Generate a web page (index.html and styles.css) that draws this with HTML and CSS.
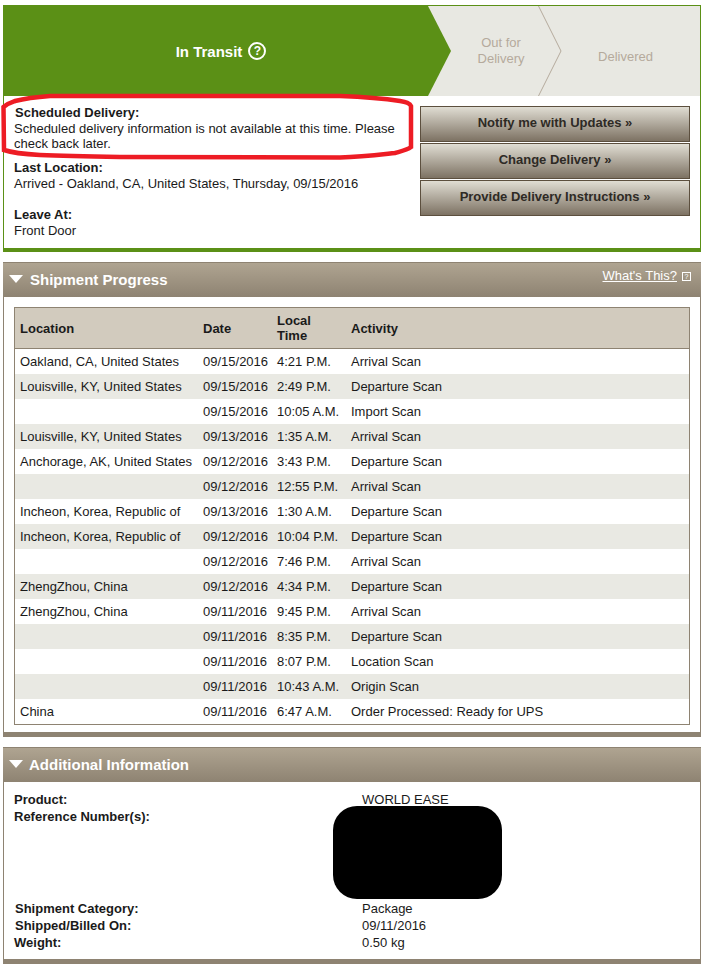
FILE: index.html
```html
<!DOCTYPE html>
<html lang="en">
<head>
    <meta charset="UTF-8">
    <title>Shipment Tracking</title>
    <link rel="stylesheet" href="styles.css">
</head>
<body>
    <section class="status-panel">
        <div class="progress">
            <div class="step-current">
                <span>In Transit</span>
                <span class="help-circle">?</span>
            </div>
            <div class="step step-out">Out for<br>Delivery</div>
            <div class="step step-delivered">Delivered</div>
            <svg class="chevron" width="24" height="90" viewBox="0 0 24 90">
                <path d="M0.5 0 L23 45 L0.5 90" fill="none" stroke="#b5aa9c" stroke-width="1"/>
            </svg>
        </div>
        <div class="status-body">
            <div class="status-info">
                <div class="info-block sched">
                    <strong>Scheduled Delivery:</strong>
                    <p>Scheduled delivery information is not available at this time. Please check back later.</p>
                </div>
                <div class="info-block last">
                    <strong>Last Location:</strong>
                    <p>Arrived - Oakland, CA, United States, Thursday, 09/15/2016</p>
                </div>
                <div class="info-block leave">
                    <strong>Leave At:</strong>
                    <p>Front Door</p>
                </div>
            </div>
            <div class="actions">
                <a class="btn">Notify me with Updates »</a>
                <a class="btn">Change Delivery »</a>
                <a class="btn">Provide Delivery Instructions »</a>
            </div>
        </div>
        <svg class="red-mark" width="416" height="70" viewBox="0 0 416 70">
            <path d="M49 3 L339 3 C366 4 386 6 399 8 C405 9 409 10 410 13 L410 54 C406 57 401 58 394 60 C376 62 361 64 339 64.5 L119 64 C86 63.5 61 63 39 62 C21 61 9 59 3 57 L2.5 14 C7 10 11 9 14 8 C26 5 36 4 49 3 Z" fill="none" stroke="#ed1c24" stroke-width="4.5"/>
        </svg>
    </section>

    <section class="panel progress-panel">
        <header class="panel-head">
            <span class="arrow-down"></span>
            <h2>Shipment Progress</h2>
            <a class="whats-this">What's This?</a>
            <span class="help-box">?</span>
        </header>
        <div class="table-wrap">
            <table>
                <thead>
                    <tr><th class="col-loc">Location</th><th class="col-date">Date</th><th class="col-time">Local<br>Time</th><th>Activity</th></tr>
                </thead>
                <tbody>
                    <tr><td>Oakland, CA, United States</td><td>09/15/2016</td><td>4:21 P.M.</td><td>Arrival Scan</td></tr>
                    <tr><td>Louisville, KY, United States</td><td>09/15/2016</td><td>2:49 P.M.</td><td>Departure Scan</td></tr>
                    <tr><td></td><td>09/15/2016</td><td>10:05 A.M.</td><td>Import Scan</td></tr>
                    <tr><td>Louisville, KY, United States</td><td>09/13/2016</td><td>1:35 A.M.</td><td>Arrival Scan</td></tr>
                    <tr><td>Anchorage, AK, United States</td><td>09/12/2016</td><td>3:43 P.M.</td><td>Departure Scan</td></tr>
                    <tr><td></td><td>09/12/2016</td><td>12:55 P.M.</td><td>Arrival Scan</td></tr>
                    <tr><td>Incheon, Korea, Republic of</td><td>09/13/2016</td><td>1:30 A.M.</td><td>Departure Scan</td></tr>
                    <tr><td>Incheon, Korea, Republic of</td><td>09/12/2016</td><td>10:04 P.M.</td><td>Departure Scan</td></tr>
                    <tr><td></td><td>09/12/2016</td><td>7:46 P.M.</td><td>Arrival Scan</td></tr>
                    <tr><td>ZhengZhou, China</td><td>09/12/2016</td><td>4:34 P.M.</td><td>Departure Scan</td></tr>
                    <tr><td>ZhengZhou, China</td><td>09/11/2016</td><td>9:45 P.M.</td><td>Arrival Scan</td></tr>
                    <tr><td></td><td>09/11/2016</td><td>8:35 P.M.</td><td>Departure Scan</td></tr>
                    <tr><td></td><td>09/11/2016</td><td>8:07 P.M.</td><td>Location Scan</td></tr>
                    <tr><td></td><td>09/11/2016</td><td>10:43 A.M.</td><td>Origin Scan</td></tr>
                    <tr><td>China</td><td>09/11/2016</td><td>6:47 A.M.</td><td>Order Processed: Ready for UPS</td></tr>
                </tbody>
            </table>
        </div>
    </section>

    <section class="panel extra-panel">
        <header class="panel-head">
            <span class="arrow-down"></span>
            <h2>Additional Information</h2>
        </header>
        <dl class="details">
            <dt>Product:</dt><dd>WORLD EASE</dd>
            <dt>Reference Number(s):</dt><dd></dd>
            <dt class="nudge">Shipment Category:</dt><dd>Package</dd>
            <dt class="nudge">Shipped/Billed On:</dt><dd>09/11/2016</dd>
            <dt>Weight:</dt><dd>0.50 kg</dd>
        </dl>
        <div class="redaction"></div>
    </section>
</body>
</html>
```

FILE: styles.css
```css
body {
    margin: 0;
    padding: 5px 5px 0 3px;
    font-family: "Liberation Sans", Arial, sans-serif;
    font-size: 13px;
    color: #1a1a1a;
    background-color: #ffffff;
}
p, h2, dl, dd {
    margin: 0;
}

/* top status box */
.status-panel {
    position: relative;
    height: 242px;
    border: 1px solid #5b9016;
    border-bottom: 4px solid #5b9016;
}
.progress {
    position: relative;
    display: flex;
    height: 90px;
    background-color: #e8e8e2;
}
.step-current {
    display: flex;
    align-items: center;
    justify-content: center;
    gap: 6px;
    width: 447px;
    padding-right: 13px;
    box-sizing: border-box;
    background-color: #5b9016;
    clip-path: polygon(0 0, 424px 0, 447px 45px, 424px 90px, 0 90px);
    color: #ffffff;
    font-size: 15px;
    font-weight: bold;
}
.help-circle {
    width: 14px;
    height: 14px;
    border: 2px solid #ffffff;
    border-radius: 50%;
    font-size: 12px;
    line-height: 14px;
    text-align: center;
}
.step {
    display: flex;
    align-items: center;
    justify-content: center;
    text-align: center;
    color: #b5aa9c;
    line-height: 16px;
}
.step-out {
    width: 100px;
}
.step-delivered {
    flex: 1;
    padding-top: 12px;
}
.chevron {
    position: absolute;
    left: 534px;
    top: 0;
}
.status-body {
    display: flex;
}
.status-info {
    width: 416px;
    box-sizing: border-box;
    padding: 9px 0 0 10px;
}
.info-block strong {
    display: block;
    line-height: 16px;
}
.info-block p {
    line-height: 15px;
}
.sched strong {
    margin-left: 1px;
}
.last {
    margin-top: 9px;
}
.leave {
    margin-top: 16px;
}
.actions {
    display: flex;
    flex-direction: column;
    gap: 1px;
    width: 270px;
    padding-top: 10px;
}
.btn {
    display: block;
    height: 34px;
    line-height: 32px;
    border: 1px solid #5c4f3e;
    background: linear-gradient(#e0ddd3, #7d7263);
    text-align: center;
    font-weight: bold;
    color: #2e2a25;
}
.red-mark {
    position: absolute;
    left: -3px;
    top: 87px;
}

/* brown panels */
.panel {
    position: relative;
    border: 1px solid #8e8372;
    border-top: 0;
    border-bottom: 5px solid #8e8372;
}
.progress-panel {
    margin-top: 10px;
}
.extra-panel {
    margin-top: 10px;
}
.panel-head {
    display: flex;
    align-items: center;
    height: 32px;
    margin: 0 -1px;
    padding: 0 0 2px 6px;
    background: linear-gradient(#afa491, #8e8372);
    border-top: 1px solid #8e8372;
    color: #ffffff;
}
.panel-head h2 {
    flex: 1;
    font-size: 15px;
}
.extra-panel h2 {
    margin-left: -1px;
}
.arrow-down {
    width: 0;
    height: 0;
    margin-right: 7px;
    border-left: 7px solid transparent;
    border-right: 7px solid transparent;
    border-top: 8px solid #ffffff;
}
.whats-this {
    align-self: flex-start;
    margin-top: 5px;
    margin-right: 5px;
    color: #ffffff;
    text-decoration: underline;
}
.help-box {
    align-self: flex-start;
    width: 7px;
    height: 7px;
    margin: 9px 10px 0 0;
    border: 1px solid #ffffff;
    font-size: 7px;
    line-height: 7px;
    text-align: center;
}
.table-wrap {
    padding: 10px 10px 7px;
}
table {
    width: 100%;
    border-collapse: collapse;
    border: 1px solid #8e8372;
}
th {
    height: 40px;
    padding: 0 0 0 5px;
    background-color: #d2cbbe;
    border-bottom: 1px solid #8e8372;
    text-align: left;
    line-height: 15px;
}
td {
    height: 25px;
    padding: 0 0 0 5px;
    white-space: nowrap;
}
tbody tr:nth-child(even) {
    background-color: #e9e9e3;
}
.col-loc {
    width: 178px;
}
.col-date {
    width: 69px;
}
.col-time {
    width: 69px;
}

/* additional information */
.details {
    display: grid;
    grid-template-columns: 348px 1fr;
    grid-template-rows: 17px 92px 17px 17px 17px;
    padding: 9px 10px 8px;
    line-height: 17px;
}
.details dt {
    font-weight: bold;
}
.details .nudge {
    margin-left: 1px;
}
.redaction {
    position: absolute;
    left: 329px;
    top: 59px;
    width: 169px;
    height: 93px;
    border-radius: 24px;
    background-color: #000000;
}
```
